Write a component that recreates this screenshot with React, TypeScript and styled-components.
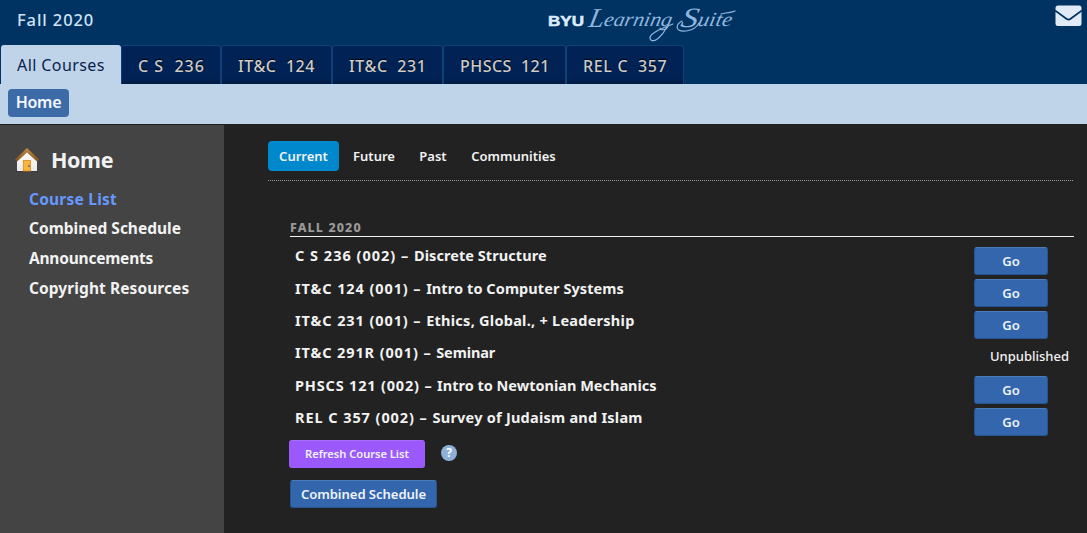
import React from 'react';
import styled, { createGlobalStyle } from 'styled-components';

const GlobalStyle = createGlobalStyle`
  * { box-sizing: border-box; }
  body {
    margin: 0;
    background: #222;
    color: #f2f2f2;
    font-family: "Noto Sans", "Open Sans", sans-serif;
  }
  button { font-family: inherit; margin: 0; }
`;

const Page = styled.div`
  width: 1087px;
  height: 533px;
  display: flex;
  flex-direction: column;
  overflow: hidden;
`;

const Header = styled.header`
  height: 84px;
  flex: none;
  background: #003262;
  display: flex;
  flex-direction: column;
`;

const TopRow = styled.div`
  height: 45px;
  display: grid;
  grid-template-columns: 548px 192px 1fr;
`;

const Term = styled.div`
  padding-left: 17px;
  font-size: 16.5px;
  line-height: 40px;
  font-weight: 500;
  letter-spacing: 0.9px;
  color: #cfe3f7;
`;

const MailButton = styled.div`
  justify-self: end;
  padding: 5px 5px 0 0;
  height: 30px;
`;

const Tabs = styled.nav`
  display: flex;
  height: 39px;
  padding-left: 1px;
`;

const Tab = styled.div<{ $active?: boolean; $width: number; $spacing?: number }>`
  width: ${(p) => p.$width}px;
  white-space: pre;
  padding-left: 16px;
  font-size: 16px;
  line-height: ${(p) => (p.$active ? 40 : 41)}px;
  font-weight: ${(p) => (p.$active ? 400 : 500)};
  letter-spacing: ${(p) => p.$spacing ?? 0}px;
  border-radius: 3px 3px 0 0;
  color: ${(p) => (p.$active ? '#0a1f4d' : '#ccc')};
  background: ${(p) => (p.$active ? '#c0d4e9' : 'linear-gradient(#002255 85%, #001a40)')};
  border: ${(p) => (p.$active ? '0' : '1px solid #0f4277')};
  border-bottom: 0;
  text-shadow: ${(p) => (p.$active ? 'none' : '0 -1px 1px #000')};
`;

const SubBar = styled.div`
  height: 41px;
  flex: none;
  padding: 5px 8px;
  background: #c0d4e9;
  border-bottom: 1px solid #1c1f23;
`;

const Crumb = styled.div`
  width: 61px;
  height: 28px;
  border-radius: 4px;
  background: #3d6ba8;
  color: #f4f8ff;
  font-size: 16px;
  font-weight: 600;
  line-height: 26px;
  text-align: center;
  letter-spacing: -0.3px;
`;

const Body = styled.div`
  flex: 1;
  display: flex;
`;

const Sidebar = styled.aside`
  width: 224px;
  background: #444;
  padding: 21px 0 0 15px;
`;

const SideTitle = styled.div`
  display: flex;
  gap: 12px;
  height: 30px;
  font-size: 21.5px;
  line-height: 28px;
  font-weight: 700;
  letter-spacing: -0.4px;
`;

const SideLinks = styled.div`
  padding: 7.7px 0 0 14px;
  display: grid;
  grid-auto-rows: 29.7px;
`;

const SideLink = styled.div<{ $current?: boolean; $spacing: number }>`
  font-size: 15.5px;
  font-weight: 700;
  line-height: 30px;
  letter-spacing: ${(p) => p.$spacing}px;
  color: ${(p) => (p.$current ? '#6699ff' : '#f2f2f2')};
`;

const Main = styled.main`
  flex: 1;
  padding: 16px 13px 0 44px;
`;

const Filters = styled.div`
  display: flex;
  height: 40px;
  width: 805px;
  border-bottom: 1px dotted #999;
`;

const Filter = styled.div<{ $active?: boolean; $width: number }>`
  width: ${(p) => p.$width}px;
  height: 30px;
  border-radius: 4px;
  background: ${(p) => (p.$active ? '#0088cc' : 'transparent')};
  font-size: 13px;
  font-weight: 600;
  line-height: 30px;
  text-align: center;
`;

const Courses = styled.section`
  padding: 37px 0 0 22px;
`;

const SectionTitle = styled.h2`
  margin: 0;
  height: 19px;
  font-size: 12.5px;
  line-height: 19px;
  font-weight: 800;
  letter-spacing: 1.1px;
  color: #999;
  border-bottom: 1px solid #f0f0f0;
`;

const CourseGrid = styled.div`
  display: grid;
  grid-auto-rows: 32.3px;
  padding-top: 3px;
`;

const CourseRow = styled.div`
  display: flex;
  justify-content: space-between;
  padding-left: 5px;
`;

const CourseName = styled.div`
  margin-top: -0.6px;
  font-size: 14.5px;
  font-weight: 700;
  line-height: 32px;
  white-space: pre;
`;

const Tracked = styled.span<{ $spacing: number }>`
  letter-spacing: ${(p) => p.$spacing}px;
`;

const Button = styled.button<{ $width: number; $purple?: boolean }>`
  width: ${(p) => p.$width}px;
  height: 28px;
  padding: 0;
  border-radius: 3px;
  border: 1px solid ${(p) => (p.$purple ? '#9c5cfd' : '#27548f')};
  border-top-color: ${(p) => (p.$purple ? '#a76efc' : '#4b7bb9')};
  background: ${(p) => (p.$purple ? '#9b59fc' : '#3366ad')};
  color: #eef2fa;
  font-size: ${(p) => (p.$purple ? 11.2 : 13.1)}px;
  font-weight: 600;
  letter-spacing: -0.06px;
  line-height: 26px;
`;

const GoCell = styled.div`
  padding: 6.8px 26px 0 0;
`;

const Status = styled.div`
  padding: 2.8px 5px 0 0;
  font-size: 13px;
  font-weight: 500;
  line-height: 32px;
`;

const Actions = styled.div`
  display: flex;
  align-items: center;
  gap: 16px;
  margin: 6.2px 0 12px -1px;
`;

const Help = styled.div`
  width: 16px;
  height: 16px;
  margin-top: -2px;
  border-radius: 50%;
  background: #8fb0d6;
  color: #fff;
  font-size: 12px;
  line-height: 16px;
  font-weight: 700;
  text-align: center;
`;

const Logo = () => (
  <svg width="192" height="45" viewBox="0 0 192 45">
    <text x="0" y="26" fontFamily="Liberation Sans" fontWeight="700" fontSize="14" fill="#dcecff" stroke="#dcecff" strokeWidth=".5" textLength="36" lengthAdjust="spacingAndGlyphs">BYU</text>
    <g fontFamily="Liberation Serif" fontStyle="italic" fill="#8fb6df" transform="translate(0 26) skewX(-12)">
      <text x="40" y="1" fontSize="27" textLength="15" lengthAdjust="spacingAndGlyphs">L</text>
      <text x="55" y="0" fontSize="20" textLength="68" lengthAdjust="spacingAndGlyphs">earning</text>
      <text x="132" y="1" fontSize="28" textLength="17" lengthAdjust="spacingAndGlyphs">S</text>
      <text x="149" y="0" fontSize="20" textLength="34" lengthAdjust="spacingAndGlyphs">uite</text>
    </g>
    <g fill="none" stroke="#8fb6df" strokeWidth="1.2" strokeLinecap="round">
      <path d="M119 27C114 36 107 43 103 40C98 35 112 29 125 24" />
      <path d="M134 21C127 25 127 32 138 31C145 30 149 27 151 23" />
      <path d="M173 14C179 12 183 13 187 11" />
    </g>
  </svg>
);

const MailIcon = () => (
  <svg width="27" height="22" viewBox="0 0 27 22">
    <rect x=".5" y=".5" width="26" height="20.5" rx="2.5" fill="#e0ebf7" />
    <path d="M0 5.5L11.7 13.9Q13.5 15.1 15.3 13.9L27 5.5" fill="none" stroke="#003262" strokeWidth="1.8" />
  </svg>
);

const HouseIcon = () => (
  <svg width="24" height="28" viewBox="0 0 24 28">
    <defs>
      <linearGradient id="wall" x1="0" y1="0" x2="0" y2="1">
        <stop offset="0" stopColor="#fff" />
        <stop offset="1" stopColor="#e9e9e9" />
      </linearGradient>
      <linearGradient id="roof" x1="0" y1="0" x2="0" y2="1">
        <stop offset="0" stopColor="#c48d48" />
        <stop offset="1" stopColor="#805018" />
      </linearGradient>
    </defs>
    <path d="M1 25.5H23" stroke="#333" strokeWidth="1.5" opacity=".5" />
    <path d="M2 13L12 4L22 13V25H2Z" fill="url(#wall)" />
    <path d="M12 2L0 13.5L2 15.5L12 6.5L22 15.5L24 13.5Z" fill="url(#roof)" />
    <rect x="8.3" y="14.5" width="7.2" height="10.5" fill="#f8b43d" stroke="#d98b1c" strokeWidth=".8" />
    <path d="M13 20H15" stroke="#6b6b70" strokeWidth="1.5" />
  </svg>
);

const tabs = [
  { label: 'C S  236', width: 100, spacing: 1 },
  { label: 'IT&C  124', width: 111, spacing: 0.55 },
  { label: 'IT&C  231', width: 111, spacing: 0.6 },
  { label: 'PHSCS  121', width: 123, spacing: 0.45 },
  { label: 'REL C  357', width: 118, spacing: 0.67 },
];

const courses = [
  { code: 'C S 236 (002) – ', title: 'Discrete Structure', published: true, tracking: [1, 0.06] },
  { code: 'IT&C 124 (001) – ', title: 'Intro to Computer Systems', published: true, tracking: [0.9, 0.08] },
  { code: 'IT&C 231 (001) – ', title: 'Ethics, Global., + Leadership', published: true, tracking: [0.9, 0.26] },
  { code: 'IT&C 291R (001) – ', title: 'Seminar', published: false, tracking: [0.88, -0.1] },
  { code: 'PHSCS 121 (002) – ', title: 'Intro to Newtonian Mechanics', published: true, tracking: [0.82, 0] },
  { code: 'REL C 357 (002) – ', title: 'Survey of Judaism and Islam', published: true, tracking: [0.93, 0.24] },
];

export default function App() {
  return (
    <Page>
      <GlobalStyle />
      <Header>
        <TopRow>
          <Term>Fall 2020</Term>
          <Logo />
          <MailButton><MailIcon /></MailButton>
        </TopRow>
        <Tabs>
          <Tab $active $width={120} $spacing={0.42}>All Courses</Tab>
          {tabs.map((t) => (
            <Tab key={t.label} $width={t.width} $spacing={t.spacing}>{t.label}</Tab>
          ))}
        </Tabs>
      </Header>
      <SubBar><Crumb>Home</Crumb></SubBar>
      <Body>
        <Sidebar>
          <SideTitle><HouseIcon />Home</SideTitle>
          <SideLinks>
            <SideLink $current $spacing={0.22}>Course List</SideLink>
            <SideLink $spacing={0}>Combined Schedule</SideLink>
            <SideLink $spacing={-0.22}>Announcements</SideLink>
            <SideLink $spacing={0.08}>Copyright Resources</SideLink>
          </SideLinks>
        </Sidebar>
        <Main>
          <Filters>
            <Filter $active $width={71}>Current</Filter>
            <Filter $width={70}>Future</Filter>
            <Filter $width={48}>Past</Filter>
            <Filter $width={113}>Communities</Filter>
          </Filters>
          <Courses>
            <SectionTitle>FALL 2020</SectionTitle>
            <CourseGrid>
              {courses.map((c) => (
                <CourseRow key={c.code}>
                  <CourseName>
                    <Tracked $spacing={c.tracking[0]}>{c.code}</Tracked>
                    <Tracked $spacing={c.tracking[1]}>{c.title}</Tracked>
                  </CourseName>
                  {c.published ? <GoCell><Button $width={74}>Go</Button></GoCell> : <Status>Unpublished</Status>}
                </CourseRow>
              ))}
            </CourseGrid>
            <Actions>
              <Button $width={136} $purple>Refresh Course List</Button>
              <Help>?</Help>
            </Actions>
            <Button $width={147}>Combined Schedule</Button>
          </Courses>
        </Main>
      </Body>
    </Page>
  );
}
